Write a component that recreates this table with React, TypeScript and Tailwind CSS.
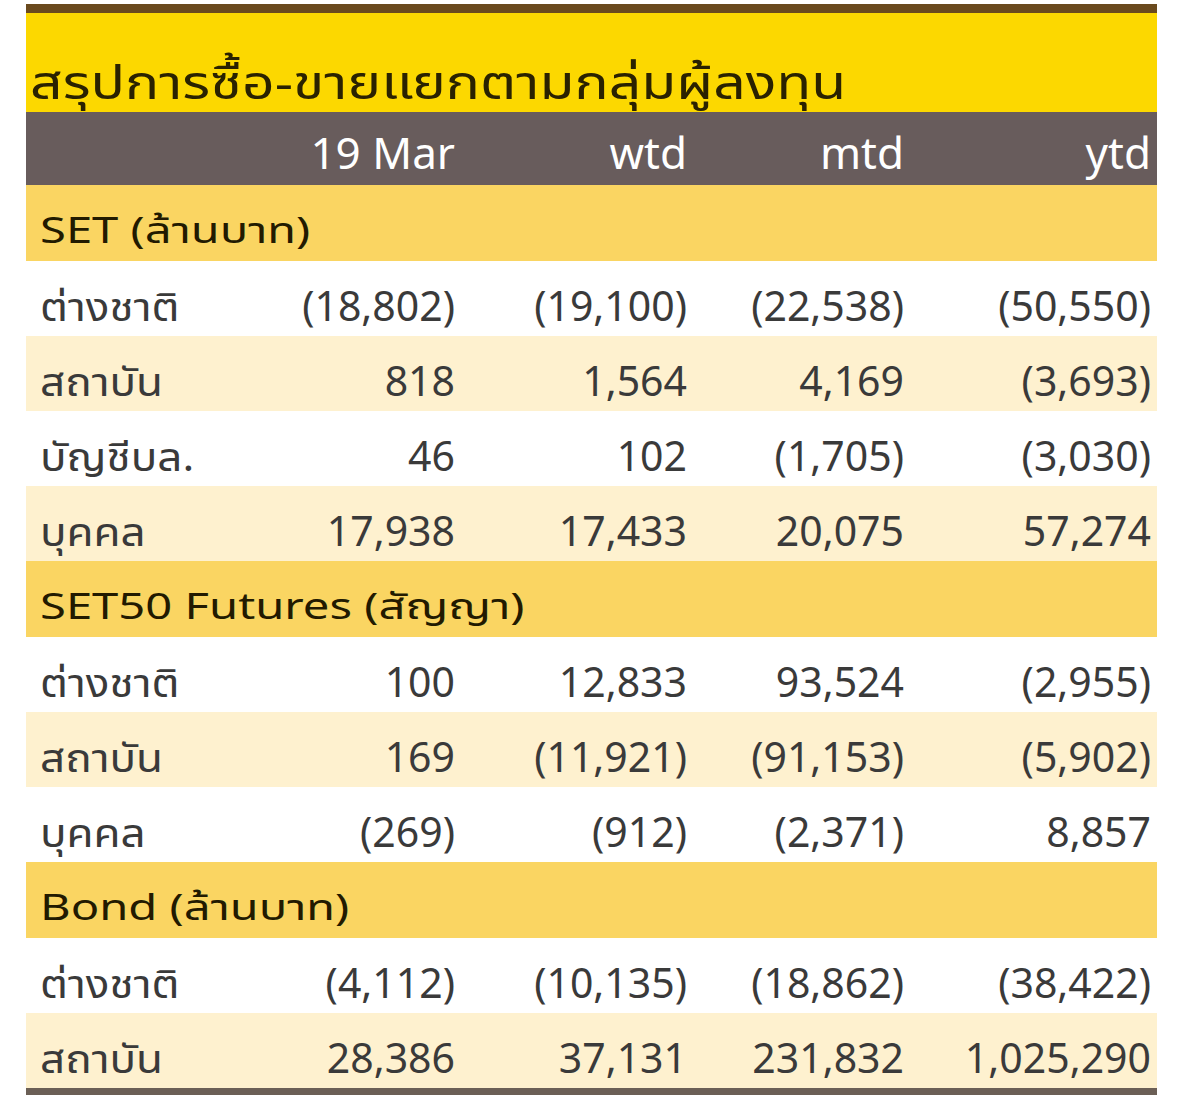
import React from "react";

type Row = { label: string; v: [string, string, string, string]; kind: "white" | "cream" };

const sections: { title: string; rows: Row[] }[] = [
  {
    title: "SET (ล้านบาท)",
    rows: [
      { label: "ต่างชาติ", v: ["(18,802)", "(19,100)", "(22,538)", "(50,550)"], kind: "white" },
      { label: "สถาบัน", v: ["818", "1,564", "4,169", "(3,693)"], kind: "cream" },
      { label: "บัญชีบล.", v: ["46", "102", "(1,705)", "(3,030)"], kind: "white" },
      { label: "บุคคล", v: ["17,938", "17,433", "20,075", "57,274"], kind: "cream" },
    ],
  },
  {
    title: "SET50 Futures (สัญญา)",
    rows: [
      { label: "ต่างชาติ", v: ["100", "12,833", "93,524", "(2,955)"], kind: "white" },
      { label: "สถาบัน", v: ["169", "(11,921)", "(91,153)", "(5,902)"], kind: "cream" },
      { label: "บุคคล", v: ["(269)", "(912)", "(2,371)", "8,857"], kind: "white" },
    ],
  },
  {
    title: "Bond (ล้านบาท)",
    rows: [
      { label: "ต่างชาติ", v: ["(4,112)", "(10,135)", "(18,862)", "(38,422)"], kind: "white" },
      { label: "สถาบัน", v: ["28,386", "37,131", "231,832", "1,025,290"], kind: "cream" },
    ],
  },
];

const font = { fontFamily: "Tahoma, 'Noto Sans Thai', 'Noto Sans', 'DejaVu Sans', sans-serif" };
const cols = "grid grid-cols-[260px_172px_232px_217px_250px] items-center";

export default function App() {
  return (
    <div className="bg-white w-[1200px] h-[1119px] pt-[4px] pl-[26px]" style={font}>
      <div className="w-[1131px]">
        <div className="h-[9px] bg-[#6a4a1e]" />
        <div className="h-[99px] bg-[#fcd800] flex items-end pl-[4px] relative z-10">
          <span className="inline-block origin-left scale-x-[1.24] text-[46px] leading-none text-[#2a2200] pb-[4px] whitespace-nowrap">
            สรุปการซื้อ-ขายแยกตามกลุ่มผู้ลงทุน
          </span>
        </div>
        <div className={"h-[73px] bg-[#685c5c] text-white text-[44px] leading-none pt-[14px] " + cols}>
          <div />
          <div className="text-right pr-[3px] whitespace-nowrap">19 Mar</div>
          <div className="text-right pr-[3px]">wtd</div>
          <div className="text-right pr-[3px]">mtd</div>
          <div className="text-right pr-[6px]">ytd</div>
        </div>
        {sections.map((s) => (
          <div key={s.title}>
            <div className="h-[76px] bg-[#fad562] flex items-center pl-[14px] pt-[18px] text-[36px] leading-none text-[#221a00]">
              <span className="inline-block origin-left scale-x-[1.31] whitespace-nowrap">{s.title}</span>
            </div>
            {s.rows.map((r, i) => (
              <div
                key={i}
                className={
                  "h-[75px] pt-[20px] text-[41px] leading-none text-[#3a3a3a] " +
                  cols +
                  " " +
                  (r.kind === "cream" ? "bg-[#fef1cf]" : "bg-white")
                }
              >
                <div className="pl-[14px] whitespace-nowrap">
                  <span className="inline-block origin-left scale-x-[1.1] text-[40px]">{r.label}</span>
                </div>
                <div className="text-right pr-[3px] whitespace-nowrap">{r.v[0]}</div>
                <div className="text-right pr-[3px] whitespace-nowrap">{r.v[1]}</div>
                <div className="text-right pr-[3px] whitespace-nowrap">{r.v[2]}</div>
                <div className="text-right pr-[6px] whitespace-nowrap">{r.v[3]}</div>
              </div>
            ))}
          </div>
        ))}
        <div className="h-[7px] bg-[#6b5f56]" />
      </div>
    </div>
  );
}
